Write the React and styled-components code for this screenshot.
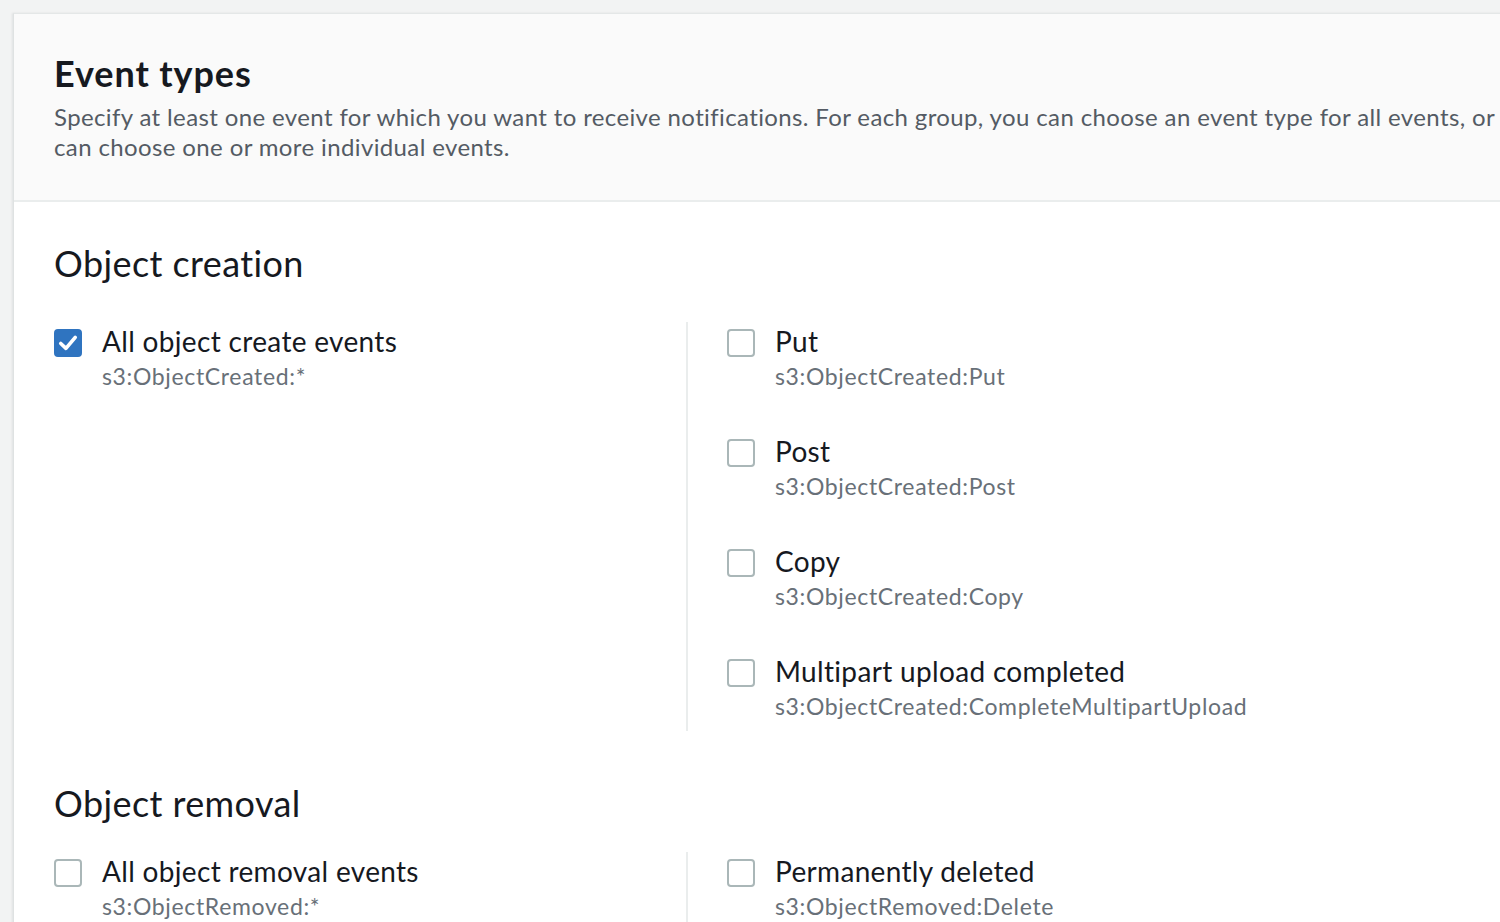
import React from 'react';
import styled, { createGlobalStyle } from 'styled-components';

const GlobalStyle = createGlobalStyle`
  html, body {
    margin: 0;
    padding: 0;
    background: #f2f3f3;
    overflow: hidden;
  }
  body {
    font-family: Lato, "Liberation Sans", sans-serif;
    color: #16191f;
  }
`;

const sections = [
  {
    title: 'Object creation',
    gap: 46,
    all: { label: 'All object create events', api: 's3:ObjectCreated:*', checked: true },
    items: [
      { label: 'Put', api: 's3:ObjectCreated:Put' },
      { label: 'Post', api: 's3:ObjectCreated:Post' },
      { label: 'Copy', api: 's3:ObjectCreated:Copy' },
      { label: 'Multipart upload completed', api: 's3:ObjectCreated:CompleteMultipartUpload' },
    ],
  },
  {
    title: 'Object removal',
    gap: 36,
    all: { label: 'All object removal events', api: 's3:ObjectRemoved:*' },
    items: [
      { label: 'Permanently deleted', api: 's3:ObjectRemoved:Delete' },
      { label: 'Delete marker created', api: 's3:ObjectRemoved:DeleteMarkerCreated' },
    ],
  },
];

const Checkbox = ({ checked }) => (
  <Box checked={checked}>
    {checked && (
      <svg width="22" height="22" viewBox="0 0 14 14">
        <polyline points="2.4,7.3 5.7,10.4 11.6,3.4" fill="none" stroke="#fff" strokeWidth="2.3" strokeLinecap="round" strokeLinejoin="round" />
      </svg>
    )}
  </Box>
);

const Option = ({ label, api, checked }) => (
  <OptionRow>
    <Checkbox checked={checked} />
    <OptionText>
      <OptionLabel>{label}</OptionLabel>
      <OptionApi>{api}</OptionApi>
    </OptionText>
  </OptionRow>
);

const App = () => {
  return (
    <Page>
      <GlobalStyle />
      <Card>
        <Header>
          <Title>Event types</Title>
          <Description>
            Specify at least one event for which you want to receive notifications. For each group, you can choose an event type for all events, or you can choose one or more individual events.
          </Description>
        </Header>
        <Body>
          {sections.map((s) => (
            <Section key={s.title}>
              <SectionTitle gap={s.gap}>{s.title}</SectionTitle>
              <Columns>
                <Column>
                  <Option {...s.all} />
                </Column>
                <Column divided>
                  {s.items.map((it) => (
                    <Option key={it.api} {...it} />
                  ))}
                </Column>
              </Columns>
            </Section>
          ))}
        </Body>
      </Card>
    </Page>
  );
};

const Page = styled.div`
  padding: 13px 0 0 13px;
  height: 909px;
`;

const Card = styled.div`
  width: 1640px;
  background: #ffffff;
  border-top: 1px solid #e4e7e7;
  border-left: 1px solid #dfe2e2;
  box-shadow: -1px 0 2px rgba(0, 28, 36, 0.08);
`;

const Header = styled.div`
  background: #fafafa;
  padding: 37px 40px 38px 40px;
  border-bottom: 2px solid #eaeded;
`;

const Title = styled.h2`
  margin: 0;
  font-size: 36px;
  line-height: 44px;
  font-weight: 700;
  letter-spacing: 0.9px;
  color: #16191f;
`;

const Description = styled.p`
  margin: 7px 0 0 0;
  width: 1520px;
  font-size: 24px;
  line-height: 30px;
  letter-spacing: 0.375px;
  color: #545b64;
`;

const Body = styled.div`
  padding: 39px 40px 0 40px;
`;

const Section = styled.section`
  & + & {
    margin-top: 50px;
  }
`;

const SectionTitle = styled.h3`
  margin: 0 0 ${(p) => p.gap - 9}px 0;
  font-size: 36px;
  line-height: 44px;
  font-weight: 400;
  letter-spacing: 0.4px;
  color: #16191f;
`;

const Columns = styled.div`
  display: grid;
  grid-template-columns: 632px 1fr;
`;

const Column = styled.div`
  display: flex;
  flex-direction: column;
  gap: 40px;
  padding-bottom: 9px;
  ${(p) => p.divided && `
    border-left: 2px solid #eaeded;
    padding-left: 39px;
  `}
`;

const OptionRow = styled.div`
  display: flex;
  align-items: flex-start;
  gap: 20px;
`;

const Box = styled.span`
  flex: none;
  box-sizing: border-box;
  width: 28px;
  height: 28px;
  margin-top: 7px;
  border-radius: 4px;
  display: flex;
  align-items: center;
  justify-content: center;
  background: ${(p) => (p.checked ? '#2f74c0' : '#ffffff')};
  border: 2px solid ${(p) => (p.checked ? '#2f74c0' : '#aab7b8')};
`;

const OptionText = styled.div`
  display: flex;
  flex-direction: column;
`;

const OptionLabel = styled.span`
  font-size: 28px;
  line-height: 38px;
  letter-spacing: 0.33px;
  color: #16191f;
`;

const OptionApi = styled.span`
  font-size: 23px;
  line-height: 32px;
  letter-spacing: 0.65px;
  color: #687078;
`;

export default App;
